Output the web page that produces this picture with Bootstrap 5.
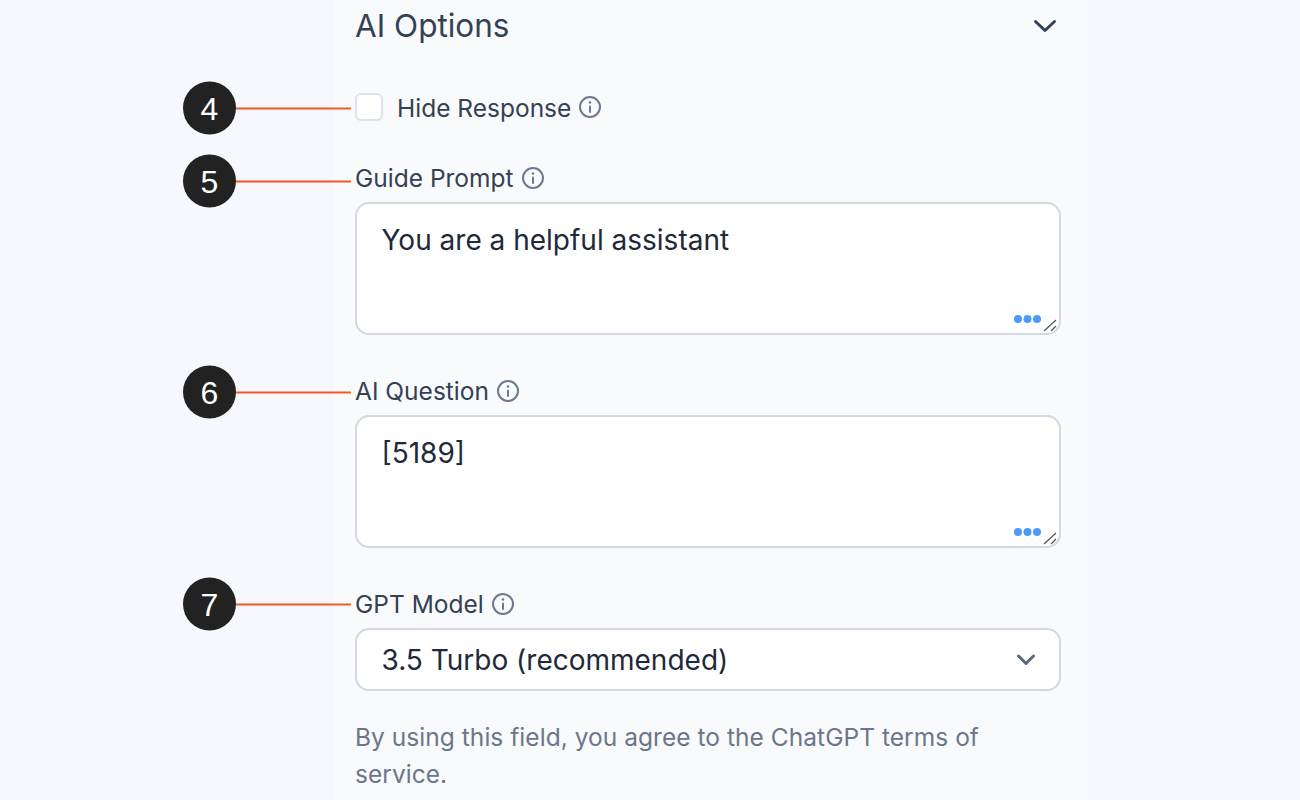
<!DOCTYPE html>
<html lang="en">
<head>
    <meta charset="UTF-8">
    <title>AI Options</title>
    <link href="https://cdn.jsdelivr.net/npm/bootstrap@5.3.0/dist/css/bootstrap.min.css" rel="stylesheet">
    <style>
        html, body {
            height: 800px;
            overflow: hidden;
        }
        body {
            background-color: #f6f8fd;
            font-family: Inter, "Liberation Sans", sans-serif;
            color: #334155;
        }
        .options-panel {
            width: 754px;
            height: 800px;
            margin-left: 334px;
            padding: 0 27px 0 21px;
            background-color: #f9fafc;
        }
        .options-head {
            height: 52px;
        }
        .options-title {
            font-size: 31.5px;
            font-weight: 400;
            line-height: 52px;
            margin: 0;
        }
        .field-row {
            position: relative;
        }
        .row-hide {
            margin-top: 41px;
            height: 28px;
        }
        .row-guide {
            margin-top: 42px;
        }
        .row-question {
            margin-top: 41px;
        }
        .row-model {
            margin-top: 41px;
        }
        .fake-check {
            width: 28px;
            height: 28px;
            background: #fff;
            border: 2px solid #dde1ea;
            border-radius: 6px;
        }
        .check-text {
            font-size: 24.5px;
            line-height: 30px;
            margin-left: 14px;
            padding-top: 2px;
        }
        .field-label {
            font-size: 24.5px;
            line-height: 30px;
            margin: 0 0 9px;
        }
        .info-icon {
            width: 24px;
            height: 24px;
            margin-left: 7px;
            color: #6b7a90;
            flex: none;
        }
        .text-box {
            position: relative;
            height: 133px;
            background: #fff;
            border: 2px solid #d3d8e3;
            border-radius: 14px;
            padding: 18px 24.5px;
            font-size: 28px;
            line-height: 36px;
            color: #1e293b;
        }
        .token-dots {
            position: absolute;
            right: 18px;
            bottom: 9px;
            width: 28px;
            height: 10px;
        }
        .resize-grip {
            position: absolute;
            right: 0;
            bottom: 0;
            width: 16px;
            height: 16px;
        }
        .select-box {
            height: 63px;
            background: #fff;
            border: 2px solid #d3d8e3;
            border-radius: 14px;
            padding: 0 23px 0 24.5px;
            font-size: 28px;
            color: #1e293b;
        }
        .select-arrow {
            width: 20px;
            height: 12px;
        }
        .help-text {
            margin: 28px 0 0;
            font-size: 24.5px;
            letter-spacing: .04px;
            line-height: 37px;
            color: #6b7789;
        }
        .callout {
            position: absolute;
            left: -172px;
            top: calc(50% + 1px);
            width: 168px;
            height: 53px;
            transform: translateY(-50%);
        }
        .row-guide .callout {
            top: calc(50% + 3px);
        }
        .row-model .callout {
            top: 50%;
        }
        .callout-dot {
            width: 53px;
            height: 53px;
            flex: none;
            border-radius: 50%;
            background: #222;
            color: #fff;
            font-family: "Liberation Sans", sans-serif;
            font-size: 32px;
        }
        .callout-line {
            flex: 1;
            height: 2px;
            background: #f1592a;
        }
        .label-line {
            position: relative;
            height: 30px;
        }
    </style>
</head>
<body>
    <div class="options-panel">
        <div class="options-head d-flex align-items-center justify-content-between">
            <h2 class="options-title">AI Options</h2>
            <svg width="24" height="14" viewBox="0 0 24 14" fill="none" stroke="#334155" stroke-width="3" stroke-linecap="round" stroke-linejoin="round" class="me-1"><path d="M2.5 2.5 12 11.5 21.5 2.5"/></svg>
        </div>

        <div class="field-row row-hide d-flex align-items-center">
            <div class="callout d-flex align-items-center"><span class="callout-dot d-flex align-items-center justify-content-center">4</span><span class="callout-line"></span></div>
            <span class="fake-check"></span>
            <span class="check-text">Hide Response</span>
            <svg class="info-icon" viewBox="0 0 24 24" fill="none" stroke="currentColor" stroke-width="2" stroke-linecap="round"><circle cx="12" cy="12" r="10"/><path d="M12 11.5v5.5"/><circle cx="12" cy="7.5" r=".6" fill="currentColor" stroke-width="1.4"/></svg>
        </div>

        <div class="row-guide">
            <div class="label-line field-label d-flex align-items-center">
                <div class="callout d-flex align-items-center"><span class="callout-dot d-flex align-items-center justify-content-center">5</span><span class="callout-line"></span></div>
                Guide Prompt
                <svg class="info-icon" viewBox="0 0 24 24" fill="none" stroke="currentColor" stroke-width="2" stroke-linecap="round"><circle cx="12" cy="12" r="10"/><path d="M12 11.5v5.5"/><circle cx="12" cy="7.5" r=".6" fill="currentColor" stroke-width="1.4"/></svg>
            </div>
            <div class="text-box">
                You are a helpful assistant
                <svg class="token-dots" viewBox="0 0 28 10" fill="#4b9bfb"><circle cx="5" cy="5" r="4"/><circle cx="14.500" cy="5" r="4"/><circle cx="24" cy="5" r="4"/></svg>
                <svg class="resize-grip" viewBox="0 0 16 16" fill="none" stroke="#555" stroke-width="1.2"><path d="M1 14 13 3M8 14l5-5"/></svg>
            </div>
        </div>

        <div class="row-question">
            <div class="label-line field-label d-flex align-items-center">
                <div class="callout d-flex align-items-center"><span class="callout-dot d-flex align-items-center justify-content-center">6</span><span class="callout-line"></span></div>
                AI Question
                <svg class="info-icon" viewBox="0 0 24 24" fill="none" stroke="currentColor" stroke-width="2" stroke-linecap="round"><circle cx="12" cy="12" r="10"/><path d="M12 11.5v5.5"/><circle cx="12" cy="7.5" r=".6" fill="currentColor" stroke-width="1.4"/></svg>
            </div>
            <div class="text-box">
                [5189]
                <svg class="token-dots" viewBox="0 0 28 10" fill="#4b9bfb"><circle cx="5" cy="5" r="4"/><circle cx="14.500" cy="5" r="4"/><circle cx="24" cy="5" r="4"/></svg>
                <svg class="resize-grip" viewBox="0 0 16 16" fill="none" stroke="#555" stroke-width="1.2"><path d="M1 14 13 3M8 14l5-5"/></svg>
            </div>
        </div>

        <div class="row-model">
            <div class="label-line field-label d-flex align-items-center">
                <div class="callout d-flex align-items-center"><span class="callout-dot d-flex align-items-center justify-content-center">7</span><span class="callout-line"></span></div>
                GPT Model
                <svg class="info-icon" viewBox="0 0 24 24" fill="none" stroke="currentColor" stroke-width="2" stroke-linecap="round"><circle cx="12" cy="12" r="10"/><path d="M12 11.5v5.5"/><circle cx="12" cy="7.5" r=".6" fill="currentColor" stroke-width="1.4"/></svg>
            </div>
            <div class="select-box d-flex align-items-center justify-content-between">
                <span>3.5 Turbo (recommended)</span>
                <svg class="select-arrow" viewBox="0 0 20 12" fill="none" stroke="#5b677c" stroke-width="3" stroke-linecap="round" stroke-linejoin="round"><path d="M2.500 2 10 9.500 17.500 2"/></svg>
            </div>
            <p class="help-text">By using this field, you agree to the ChatGPT terms of service.</p>
        </div>
    </div>
    <script src="https://cdn.jsdelivr.net/npm/bootstrap@5.3.0/dist/js/bootstrap.bundle.min.js"></script>
</body>
</html>
